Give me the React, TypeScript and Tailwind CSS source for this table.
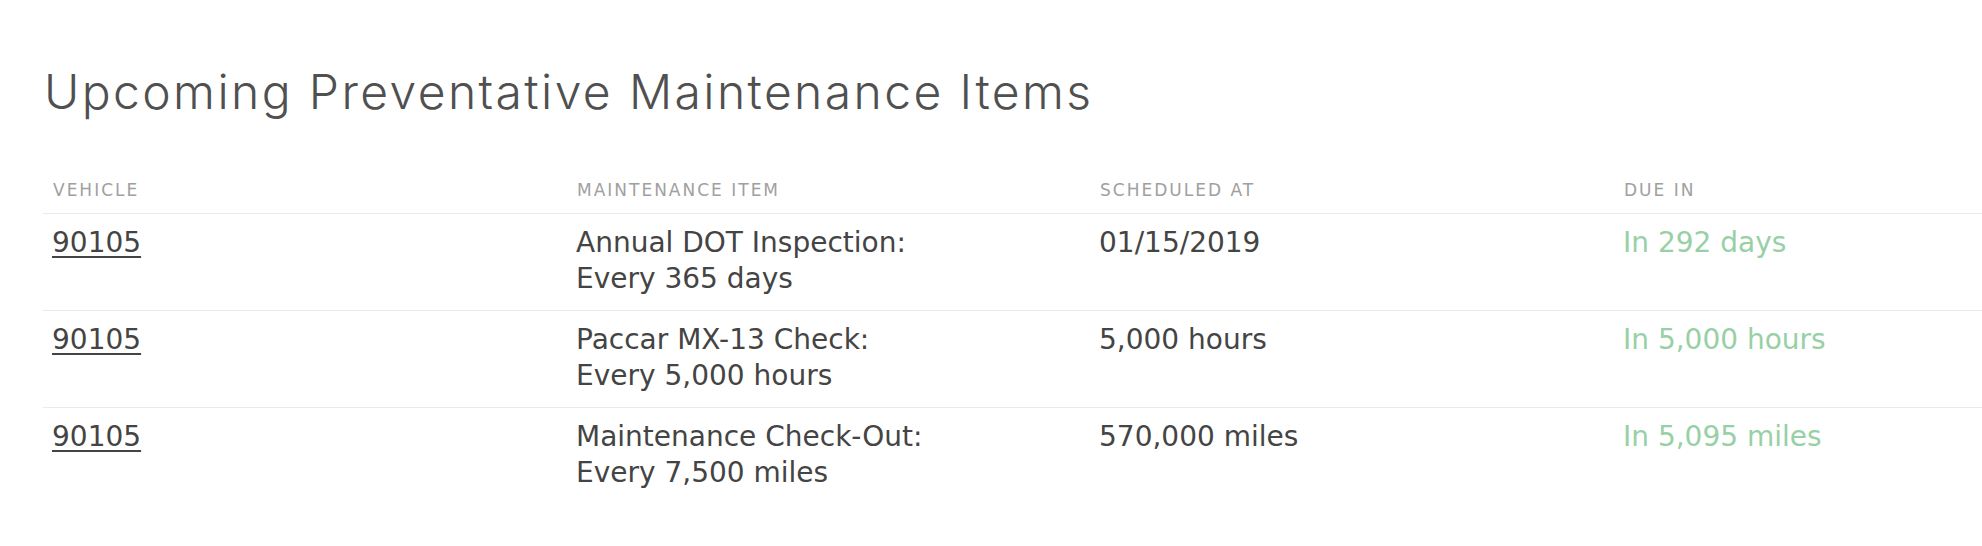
const items = [
  {
    vehicle: '90105',
    name: 'Annual DOT Inspection:',
    interval: 'Every 365 days',
    scheduled: '01/15/2019',
    due: 'In 292 days',
  },
  {
    vehicle: '90105',
    name: 'Paccar MX-13 Check:',
    interval: 'Every 5,000 hours',
    scheduled: '5,000 hours',
    due: 'In 5,000 hours',
  },
  {
    vehicle: '90105',
    name: 'Maintenance Check-Out:',
    interval: 'Every 7,500 miles',
    scheduled: '570,000 miles',
    due: 'In 5,095 miles',
  },
]

const headers = ['Vehicle', 'Maintenance Item', 'Scheduled At', 'Due In']

export default function App() {
  return (
    <div className="min-h-screen overflow-hidden bg-white pl-[43px] font-['DejaVu_Sans',sans-serif]">
      <h1 className="mt-[68px] ml-[1px] font-['Inter',sans-serif] text-[48px] leading-[48px] font-light tracking-[2.4px] text-[#505050]">
        Upcoming Preventative Maintenance Items
      </h1>

      <div className="mt-[64px]">
        {/* header row */}
        <div className="grid grid-cols-[524px_523px_524px_1fr] border-b border-[#ebebeb] pb-[13px]">
          {headers.map((h) => (
            <div
              key={h}
              className="pl-[10px] text-[17px] leading-[20px] uppercase tracking-[2px] text-[#a0a0a0]"
            >
              {h}
            </div>
          ))}
        </div>

        {items.map((item, i) => (
          <div
            key={item.name}
            className={`grid grid-cols-[524px_523px_524px_1fr] pt-[11px] pb-[13px] text-[28px] leading-[36px] text-[#444444] ${
              i < items.length - 1 ? 'border-b border-[#ebebeb]' : ''
            }`}
          >
            <div className="pl-[9px]">
              <a href="#" className="underline underline-offset-[4px] decoration-[2px]">
                {item.vehicle}
              </a>
            </div>
            <div className="pl-[9px]">
              <div>{item.name}</div>
              <div>{item.interval}</div>
            </div>
            <div className="pl-[9px]">{item.scheduled}</div>
            <div className="pl-[9px] text-[#98d0a5]">{item.due}</div>
          </div>
        ))}
      </div>
    </div>
  )
}
